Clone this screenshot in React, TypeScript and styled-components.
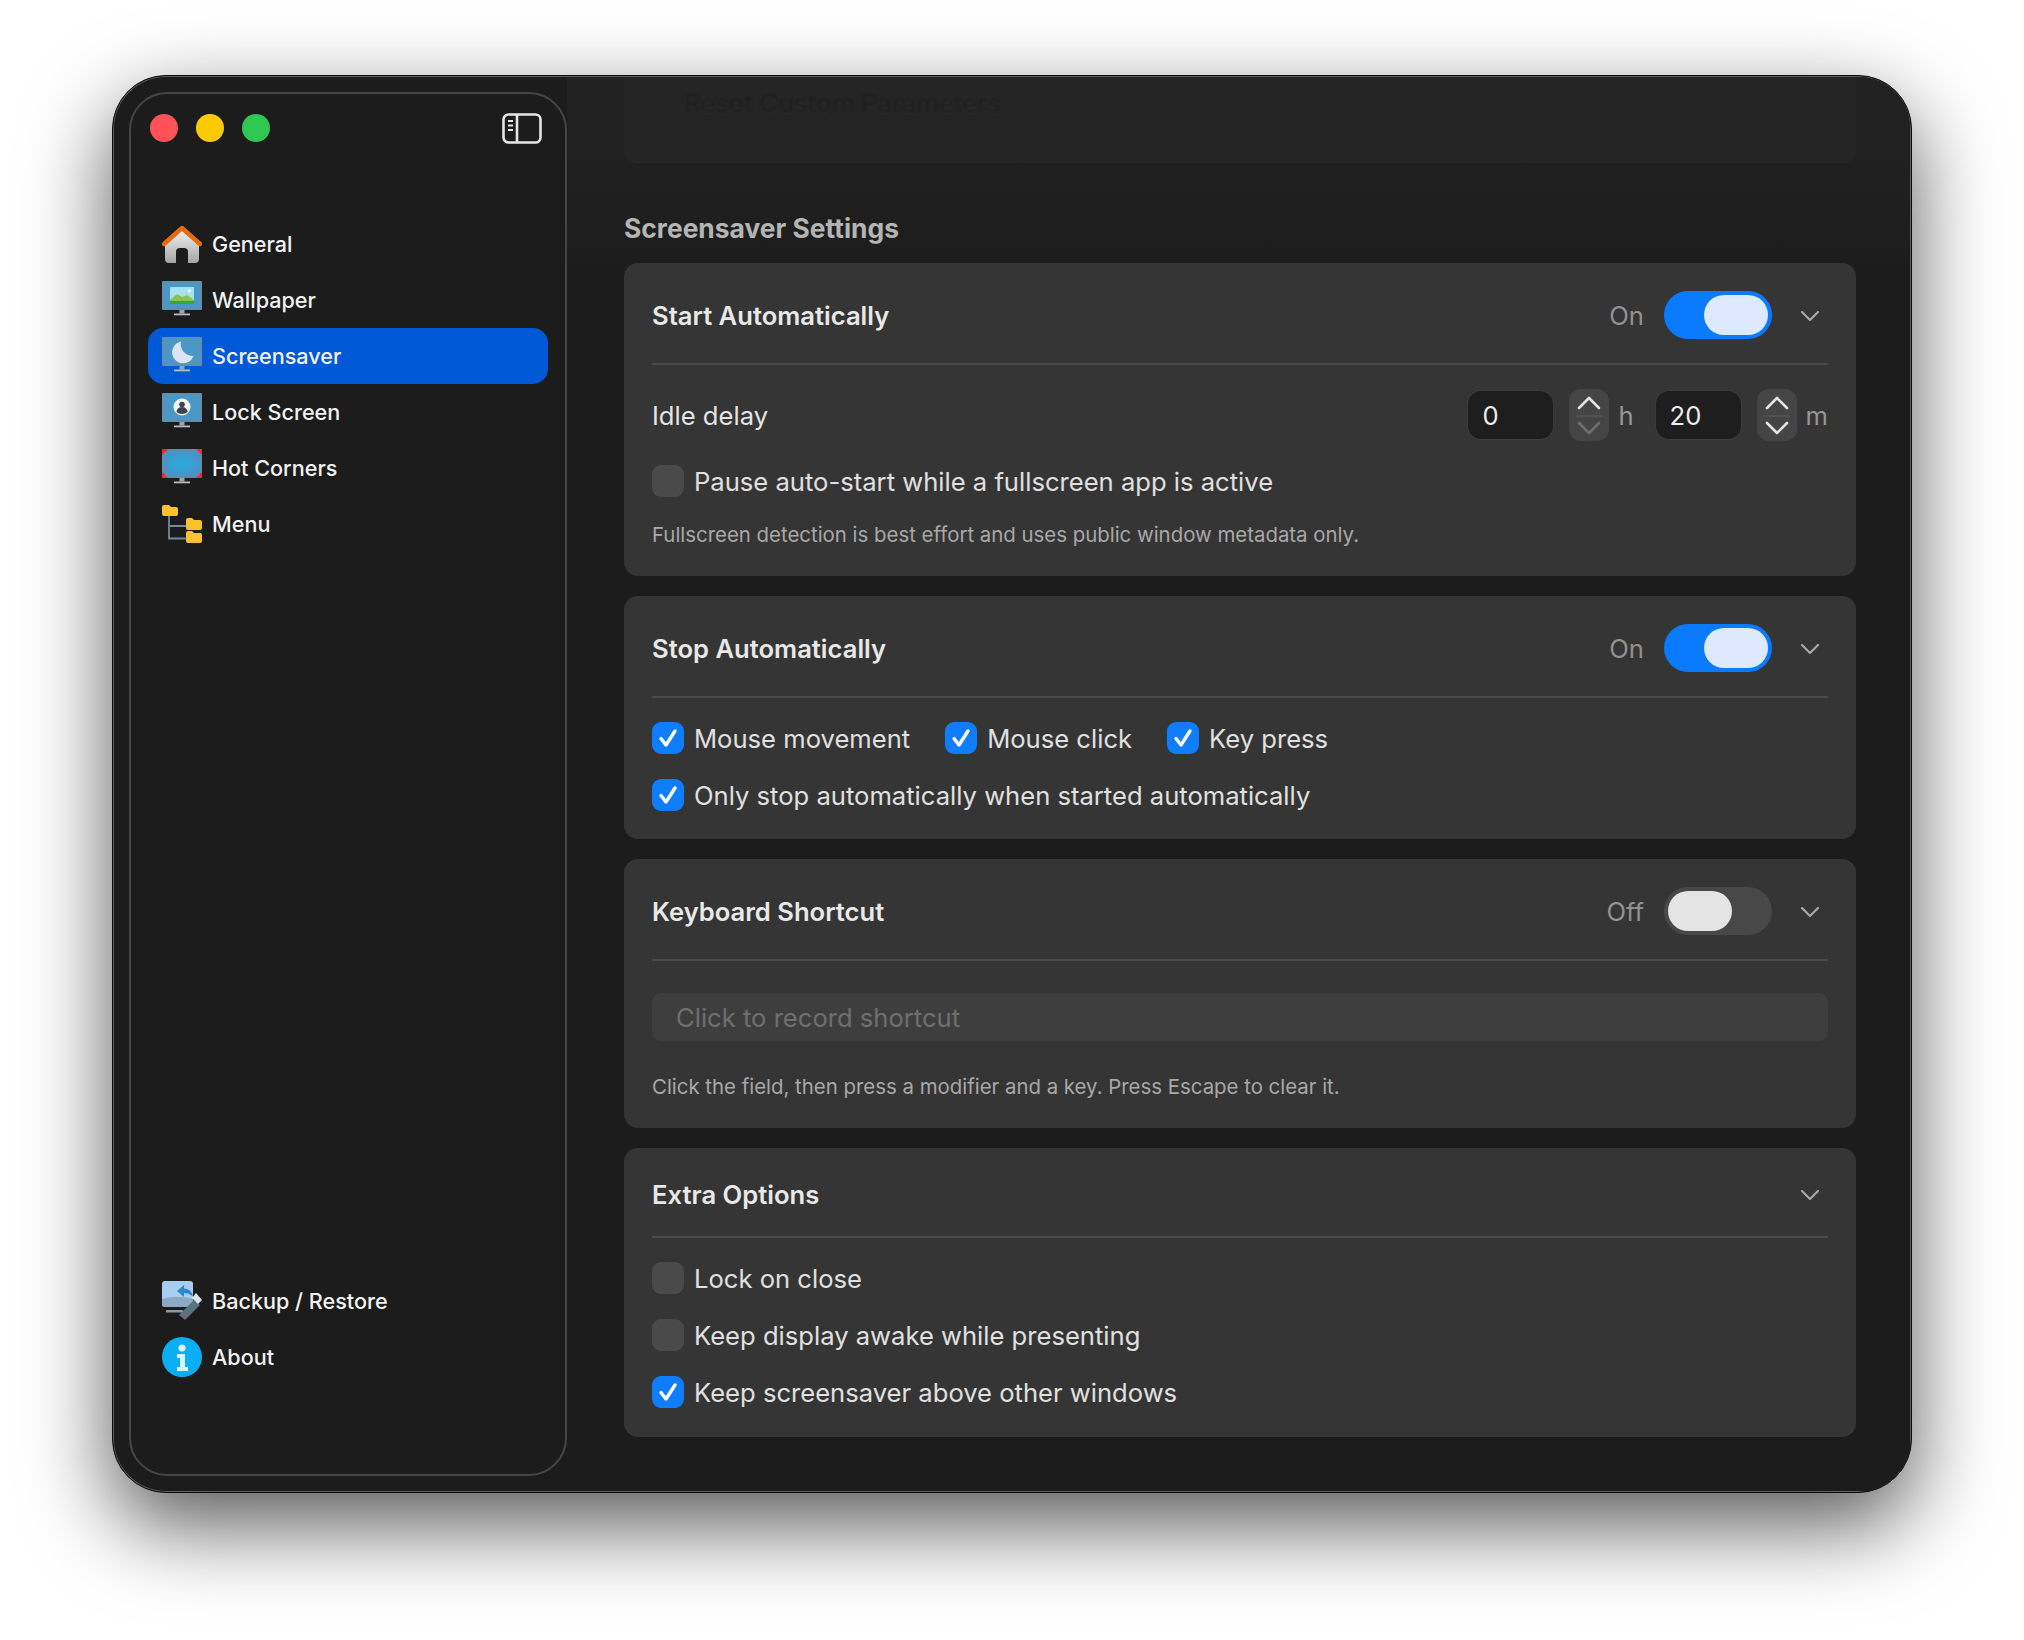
import React from "react";
import styled, { createGlobalStyle } from "styled-components";

const GlobalStyle = createGlobalStyle`
  html, body {
    margin: 0;
    padding: 0;
    background: #fff;
  }
  * {
    box-sizing: border-box;
  }
`;

const App = () => (
  <>
    <GlobalStyle />
    <Page>
      <Window>
        <Sidebar>
          <div>
            <SidebarHead>
              <Lights>
                <Light color="#ff5257" />
                <Light color="#fdca02" />
                <Light color="#2ec853" />
              </Lights>
              <SidebarToggle />
            </SidebarHead>
            <NavGroup>
              <NavItem label="General" icon={<HomeIcon />} />
              <NavItem label="Wallpaper" icon={<MonitorIcon kind="wallpaper" />} />
              <NavItem label="Screensaver" icon={<MonitorIcon kind="moon" />} active />
              <NavItem label="Lock Screen" icon={<MonitorIcon kind="lock" />} />
              <NavItem label="Hot Corners" icon={<MonitorIcon kind="corners" />} />
              <NavItem label="Menu" icon={<MenuIcon />} />
            </NavGroup>
          </div>
          <NavGroup>
            <NavItem label="Backup / Restore" icon={<BackupIcon />} />
            <NavItem label="About" icon={<AboutIcon />} />
          </NavGroup>
        </Sidebar>
        <Main>
          <GhostCard>
            <GhostText>Reset Custom Parameters</GhostText>
          </GhostCard>
          <SectionTitle>Screensaver Settings</SectionTitle>
          <Cards>
            <Card>
              <CardHeader title="Start Automatically" state="On" />
              <IdleRow>
                <RowLabel>Idle delay</RowLabel>
                <TimeFields>
                  <NumberField value="0" unit="h" downDisabled />
                  <NumberField value="20" unit="m" />
                </TimeFields>
              </IdleRow>
              <CheckRows>
                <CheckRow>
                  <Check label="Pause auto-start while a fullscreen app is active" />
                </CheckRow>
              </CheckRows>
              <Hint top={23}>Fullscreen detection is best effort and uses public window metadata only.</Hint>
            </Card>

            <Card>
              <CardHeader title="Stop Automatically" state="On" />
              <CheckRows>
                <CheckRow>
                  <Check label="Mouse movement" checked />
                  <Check label="Mouse click" checked />
                  <Check label="Key press" checked />
                </CheckRow>
                <CheckRow>
                  <Check label="Only stop automatically when started automatically" checked />
                </CheckRow>
              </CheckRows>
            </Card>

            <Card>
              <CardHeader title="Keyboard Shortcut" state="Off" />
              <ShortcutField>Click to record shortcut</ShortcutField>
              <Hint top={31}>Click the field, then press a modifier and a key. Press Escape to clear it.</Hint>
            </Card>

            <Card bottom={29}>
              <CardHeader title="Extra Options" />
              <CheckRows>
                <CheckRow>
                  <Check label="Lock on close" />
                </CheckRow>
                <CheckRow>
                  <Check label="Keep display awake while presenting" />
                </CheckRow>
                <CheckRow>
                  <Check label="Keep screensaver above other windows" checked />
                </CheckRow>
              </CheckRows>
            </Card>
          </Cards>
        </Main>
      </Window>
    </Page>
  </>
);

export default App;

const Page = styled.div`
  width: 2024px;
  height: 1640px;
  padding: 75px 112px 0;
  overflow: hidden;
  background: #fff;
  font-family: Inter, "Liberation Sans", sans-serif;
`;

const Window = styled.div`
  display: flex;
  width: 1800px;
  height: 1418px;
  padding: 1px 1px 1px 16px;
  background: #1c1c1c;
  border: 1px solid #0c0c0c;
  border-radius: 54px;
  overflow: hidden;
  box-shadow: inset 0 0 0 1px #5f5f5f, 0 32px 86px rgba(0, 0, 0, 0.66);
`;

const Sidebar = styled.aside`
  display: flex;
  flex-direction: column;
  justify-content: space-between;
  flex: none;
  width: 438px;
  height: 1384px;
  margin-top: 15px;
  padding: 0 17px 89px;
  background: #1c1c1c;
  border: 2px solid #464646;
  border-radius: 38px;
`;

const SidebarHead = styled.div`
  display: flex;
  align-items: center;
  justify-content: space-between;
  height: 68px;
  padding: 0 6px 0 0;
  margin-bottom: 54px;
`;

const Lights = styled.div`
  display: flex;
  gap: 18px;
  padding-left: 2px;
`;

const Light = styled.span<{ color: string }>`
  width: 28px;
  height: 28px;
  border-radius: 50%;
  background: ${({ color }) => color};
`;

const NavGroup = styled.nav`
  display: flex;
  flex-direction: column;
`;

const NavRow = styled.div<{ active?: boolean }>`
  display: flex;
  align-items: center;
  gap: 10px;
  width: 400px;
  height: 56px;
  padding-left: 14px;
  border-radius: 15px;
  background: ${({ active }) => (active ? "#0059d6" : "transparent")};
  color: #f2f2f2;
  font-size: 21.6px;
  font-weight: 500;
  white-space: nowrap;
`;

const IconSlot = styled.span`
  display: flex;
  flex: none;
  width: 40px;
  height: 40px;
`;

const NavItem = ({ label, icon, active }: { label: string; icon: React.ReactNode; active?: boolean }) => (
  <NavRow active={active}>
    <IconSlot>{icon}</IconSlot>
    {label}
  </NavRow>
);

const Main = styled.main`
  flex: 1;
  min-width: 0;
  padding: 0 54px 0 57px;
  background: linear-gradient(#222222, #202020 110px, #1c1c1c 200px);
  border-radius: 0 50px 0 0;
`;

const GhostCard = styled.div`
  height: 85px;
  margin-bottom: 48px;
  padding: 11px 0 0 60px;
  border-radius: 0 0 14px 14px;
  background: #252525;
  box-shadow: 0 1px 0 #292929;
`;

const GhostText = styled.div`
  font-size: 25.6px;
  font-weight: 500;
  color: #1f1f1f;
  text-shadow: 0 1px 1px #333;
  filter: blur(0.8px);
`;

const SectionTitle = styled.h2`
  height: 36px;
  margin: 0 0 17px;
  color: #b4b4b4;
  font-size: 26.4px;
  font-weight: 700;
  line-height: 36px;
`;

const Cards = styled.div`
  display: flex;
  flex-direction: column;
  gap: 20px;
`;

const Card = styled.section<{ bottom?: number }>`
  padding: 0 28px ${({ bottom }) => bottom ?? 28}px;
  background: #353535;
  border-radius: 14px;
`;

const HeaderRow = styled.header<{ tall: boolean }>`
  display: flex;
  align-items: center;
  height: ${({ tall }) => (tall ? 102 : 90)}px;
  padding-top: 4px;
  border-bottom: 2px solid #4a4a4a;
`;

const CardTitle = styled.h3`
  flex: 1;
  margin: 0;
  color: #e8e8e8;
  font-size: 25.6px;
  font-weight: 600;
`;

const StateLabel = styled.span`
  margin-right: 20px;
  color: #929292;
  font-size: 25.6px;
`;

const Toggle = styled.span<{ on: boolean }>`
  display: flex;
  align-items: center;
  justify-content: ${({ on }) => (on ? "flex-end" : "flex-start")};
  width: 108px;
  height: 48px;
  padding: 0 4px;
  border-radius: 24px;
  background: ${({ on }) => (on ? "#0a7aff" : "#484848")};
`;

const ToggleThumb = styled.span<{ on: boolean }>`
  width: 64px;
  height: 40px;
  border-radius: 20px;
  background: ${({ on }) => (on ? "#dde9ff" : "#e4e4e4")};
`;

const ChevronWrap = styled.span`
  display: flex;
  width: 56px;
  padding: 2px 0 0 29px;
`;

const CardHeader = ({ title, state }: { title: string; state?: "On" | "Off" }) => (
  <HeaderRow tall={!!state}>
    <CardTitle>{title}</CardTitle>
    {state && <StateLabel>{state}</StateLabel>}
    {state && (
      <Toggle on={state === "On"}>
        <ToggleThumb on={state === "On"} />
      </Toggle>
    )}
    <ChevronWrap>
      <svg width="18" height="11" viewBox="0 0 18 11" fill="none">
        <path d="M1 1l8 8 8-8" stroke="#a8a8a8" strokeWidth="2.2" strokeLinecap="round" strokeLinejoin="round" />
      </svg>
    </ChevronWrap>
  </HeaderRow>
);

const IdleRow = styled.div`
  display: flex;
  align-items: center;
  justify-content: space-between;
  height: 52px;
  margin-top: 24px;
`;

const RowLabel = styled.span`
  color: #e4e4e4;
  font-size: 25.6px;
`;

const TimeFields = styled.div`
  display: flex;
  align-items: center;
  gap: 22px;
`;

const FieldGroup = styled.div`
  display: flex;
  align-items: center;
`;

const NumberBox = styled.span`
  display: flex;
  align-items: center;
  width: 85px;
  height: 48px;
  padding-left: 14px;
  border-radius: 13px;
  background: #1e1e1e;
  box-shadow: 0 0 0 1px #3c3c3c;
  color: #ededed;
  font-size: 25.6px;
`;

const Stepper = styled.span`
  display: flex;
  flex-direction: column;
  align-items: center;
  justify-content: space-between;
  width: 40px;
  height: 52px;
  margin: 0 9px 0 16px;
  padding: 7px 0 6px;
  border-radius: 12px;
  background: #454545;
`;

const StepDivider = styled.span`
  width: 26px;
  height: 2px;
  background: #525252;
`;

const UnitLabel = styled.span`
  color: #979797;
  font-size: 25.6px;
`;

const NumberField = ({ value, unit, downDisabled }: { value: string; unit: string; downDisabled?: boolean }) => (
  <FieldGroup>
    <NumberBox>{value}</NumberBox>
    <Stepper>
      <svg width="24" height="14" viewBox="0 0 24 14" fill="none">
        <path d="M2 12L12 2l10 10" stroke="#e2e2e2" strokeWidth="2.6" strokeLinecap="round" strokeLinejoin="round" />
      </svg>
      <StepDivider />
      <svg width="24" height="14" viewBox="0 0 24 14" fill="none">
        <path
          d="M2 2l10 10L22 2"
          stroke={downDisabled ? "#6e6e6e" : "#e2e2e2"}
          strokeWidth="2.6"
          strokeLinecap="round"
          strokeLinejoin="round"
        />
      </svg>
    </Stepper>
    <UnitLabel>{unit}</UnitLabel>
  </FieldGroup>
);

const CheckRows = styled.div`
  display: flex;
  flex-direction: column;
  gap: 25px;
  margin-top: 24px;
`;

const CheckRow = styled.div`
  display: flex;
  gap: 35px;
  height: 32px;
`;

const CheckLabel = styled.label`
  display: flex;
  align-items: center;
  gap: 10px;
  color: #e0e0e0;
  font-size: 25.6px;
  white-space: nowrap;
`;

const CheckBox = styled.span<{ checked?: boolean }>`
  display: flex;
  align-items: center;
  justify-content: center;
  width: 32px;
  height: 32px;
  border-radius: 9px;
  background: ${({ checked }) => (checked ? "#0f7dff" : "#4a4a4a")};
`;

const Check = ({ label, checked }: { label: string; checked?: boolean }) => (
  <CheckLabel>
    <CheckBox checked={checked}>
      {checked && (
        <svg width="20" height="20" viewBox="0 0 20 20" fill="none">
          <path d="M3 10.5l5 6.5L17 3" stroke="#fff" strokeWidth="3.4" strokeLinecap="round" strokeLinejoin="round" />
        </svg>
      )}
    </CheckBox>
    {label}
  </CheckLabel>
);

const Hint = styled.p<{ top: number }>`
  margin: ${({ top }) => top + 1}px 0 -1px;
  color: #a8a8a8;
  font-size: 20.4px;
  line-height: 28px;
`;

const ShortcutField = styled.div`
  display: flex;
  align-items: center;
  height: 48px;
  margin-top: 32px;
  padding-left: 24px;
  border-radius: 9px;
  background: #3e3e3e;
  color: #6f6f6f;
  font-size: 25.6px;
`;

const SidebarToggle = () => (
  <svg width="40" height="31" viewBox="0 0 40 31" fill="none">
    <rect x="1.5" y="1.5" width="37" height="28" rx="5" stroke="#e6e6e6" strokeWidth="2.6" />
    <path d="M15 1.5v28" stroke="#e6e6e6" strokeWidth="2.6" />
    <path d="M6 8h5M6 12.5h5M6 17h5" stroke="#e6e6e6" strokeWidth="2" />
  </svg>
);

const HomeIcon = () => (
  <svg width="40" height="40" viewBox="0 0 40 40">
    <defs>
      <linearGradient id="homeBody" x1="0" y1="0" x2="0" y2="1">
        <stop offset="0" stopColor="#f1f1f1" />
        <stop offset="1" stopColor="#a5a5a5" />
      </linearGradient>
    </defs>
    <path d="M3 19L20 6l17 13v16a4 4 0 0 1-4 4h-7V28a4 4 0 0 0-4-4h-4a4 4 0 0 0-4 4v11H7a4 4 0 0 1-4-4z" fill="url(#homeBody)" />
    <path d="M2 20L20 4l18 16" fill="none" stroke="#e86a10" strokeWidth="4.4" strokeLinejoin="round" strokeLinecap="round" />
  </svg>
);

const MonitorIcon = ({ kind }: { kind: "wallpaper" | "moon" | "lock" | "corners" }) => (
  <svg width="40" height="40" viewBox="0 0 40 40">
    <defs>
      <radialGradient id="hotGlow">
        <stop offset="0" stopColor="#25aee0" />
        <stop offset="1" stopColor="#4a93c6" />
      </radialGradient>
    </defs>
    <rect x="0" y="1" width="40" height="29" rx="1" fill="#6a8ba3" />
    <rect x="1.5" y="2.5" width="37" height="26" fill={kind === "corners" ? "url(#hotGlow)" : "#4a97c8"} />
    <path d="M17.5 30h5v3.5h-5z" fill="#9aa5ab" />
    <path d="M12 33.5h16v1.8H12z" fill="#b6bcc0" />
    {kind === "wallpaper" && (
      <>
        <rect x="8" y="7" width="24" height="17" fill="#a5e2f0" />
        <path d="M8 20l7-6 5 3 5-2 7 5v4H8z" fill="#8ac24a" />
        <path d="M8 21h24v3H8z" fill="#3aa53a" />
        <circle cx="27.5" cy="11" r="1.6" fill="#fff" />
      </>
    )}
    {kind === "moon" && <path d="M19 5.5a11 11 0 1 0 12.5 14.5A12 12 0 0 1 19 5.5z" fill="#dbe4f7" />}
    {kind === "lock" && (
      <>
        <circle cx="20" cy="15" r="8.5" fill="#f4f6f8" />
        <circle cx="20" cy="12.5" r="2.8" fill="#3a4450" />
        <path d="M14.5 20a5.5 5 0 0 1 11 0 8.5 8.5 0 0 1-11 0z" fill="#3a4450" />
      </>
    )}
    {kind === "corners" && <path d="M0 1h6L0 7zM40 1h-6l6 6zM0 30h6l-6-6zM40 30h-6l6-6z" fill="#ee2a2a" />}
  </svg>
);

const MenuIcon = () => (
  <svg width="40" height="40" viewBox="0 0 40 40">
    <path d="M7 12v22.5h18M7 22h18" fill="none" stroke="#76899a" strokeWidth="1.8" />
    <path d="M0 3a2 2 0 0 1 2-2h5l2 2h5a2 2 0 0 1 2 2v5a2 2 0 0 1-2 2H2a2 2 0 0 1-2-2z" fill="#fcc22c" />
    <path d="M24 16a2 2 0 0 1 2-2h4l2 2h6a2 2 0 0 1 2 2v6a2 2 0 0 1-2 2H26a2 2 0 0 1-2-2z" fill="#fcc22c" />
    <path d="M24 29a2 2 0 0 1 2-2h4l2 2h6a2 2 0 0 1 2 2v6a2 2 0 0 1-2 2H26a2 2 0 0 1-2-2z" fill="#fcc22c" />
  </svg>
);

const BackupIcon = () => (
  <svg width="40" height="40" viewBox="0 0 40 40">
    <path d="M3 0h25a3 3 0 0 1 3 3v23H3a3 3 0 0 1-3-3V3a3 3 0 0 1 3-3z" fill="#a9cdf0" />
    <path d="M0 18c10-3 21-3 31 0v8H3a3 3 0 0 1-3-3z" fill="#8ea9c4" />
    <path d="M4 29h17v2.5H4z" fill="#8a9aa5" />
    <path d="M15 10l7-6v3.5c5 .5 8 3 9 8-3-2.5-5.5-3.5-9-3.5v4z" fill="#2a88c8" />
    <path d="M23 39l-6-5 15-15 6 5z" fill="#567481" />
    <path d="M30 17l4-5 6 7-4 4z" fill="#dfe4e6" />
    <circle cx="23" cy="34" r="1.3" fill="#e24040" />
  </svg>
);

const AboutIcon = () => (
  <svg width="40" height="40" viewBox="0 0 40 40">
    <circle cx="20" cy="20" r="20" fill="#0aaef5" />
    <circle cx="20" cy="11" r="3.6" fill="#dff3fd" />
    <path d="M15 17h8v13h3v4H15v-4h3v-9h-3z" fill="#dff3fd" />
  </svg>
);
